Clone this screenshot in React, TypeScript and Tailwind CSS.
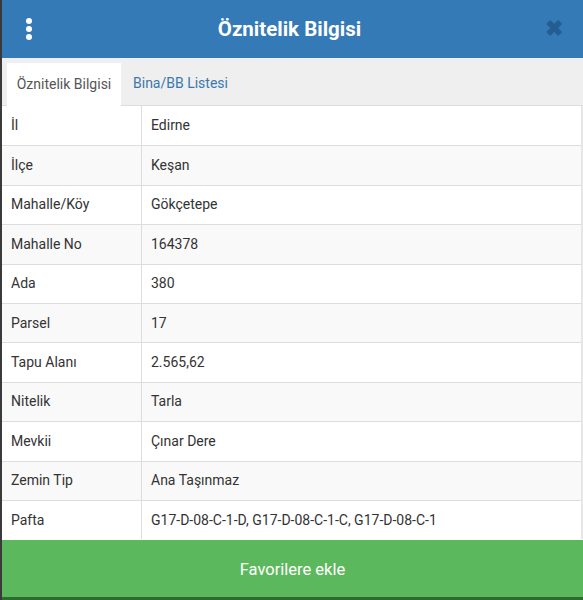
const rows: [string, string][] = [
  ['İl', 'Edirne'],
  ['İlçe', 'Keşan'],
  ['Mahalle/Köy', 'Gökçetepe'],
  ['Mahalle No', '164378'],
  ['Ada', '380'],
  ['Parsel', '17'],
  ['Tapu Alanı', '2.565,62'],
  ['Nitelik', 'Tarla'],
  ['Mevkii', 'Çınar Dere'],
  ['Zemin Tip', 'Ana Taşınmaz'],
  ['Pafta', 'G17-D-08-C-1-D, G17-D-08-C-1-C, G17-D-08-C-1'],
];

export default function App() {
  return (
    <div className="w-[583px] h-[600px] bg-white font-['Roboto',sans-serif] flex flex-col overflow-hidden border-l-2 border-[#3a3a3a]">
      {/* Header */}
      <div className="h-[58px] bg-[#337ab7] flex items-center px-4 shrink-0">
        <svg width="10" height="24" viewBox="0 0 10 24" className="ml-[6px] text-white">
          <circle cx="5" cy="4" r="3" fill="currentColor" />
          <circle cx="5" cy="12" r="3" fill="currentColor" />
          <circle cx="5" cy="20" r="3" fill="currentColor" />
        </svg>
        <h1 className="flex-1 text-center text-white text-[20.5px] font-bold">Öznitelik Bilgisi</h1>
        <span className="text-[#245d91] text-[22px] font-bold leading-none mr-1">✖</span>
      </div>

      {/* Tabs */}
      <div className="h-[48px] bg-[#efefef] flex items-end pl-[5px] border-b border-[#dddddd] shrink-0">
        <div className="h-[43px] w-[114px] bg-white flex items-center justify-center text-[14px] text-[#555555] -mb-px">
          Öznitelik Bilgisi
        </div>
        <div className="h-[43px] px-3 flex items-center text-[14px] text-[#3a78ad]">Bina/BB Listesi</div>
      </div>

      {/* Table */}
      <div className="flex flex-col border-r-2 border-[#e6e6e6]">
        {rows.map(([k, v], i) => (
          <div
            key={k}
            className={`h-[39.4px] flex text-[14px] text-[#333333] ${i > 0 ? 'border-t border-[#dddddd]' : ''} ${i % 2 === 1 ? 'bg-[#f9f9f9]' : 'bg-white'}`}
          >
            <div className="w-[140px] pl-[9px] flex items-center border-r border-[#dddddd]">{k}</div>
            <div className="flex-1 pl-[9px] flex items-center whitespace-nowrap">{v}</div>
          </div>
        ))}
      </div>

      {/* Button */}
      <div className="h-[57px] mt-[1px] bg-[#5cb85c] flex items-center justify-center text-white text-[16.5px] pt-[3px] shrink-0">
        Favorilere ekle
      </div>
      <div className="flex-1 bg-[#2e6b2e]" />
    </div>
  );
}
